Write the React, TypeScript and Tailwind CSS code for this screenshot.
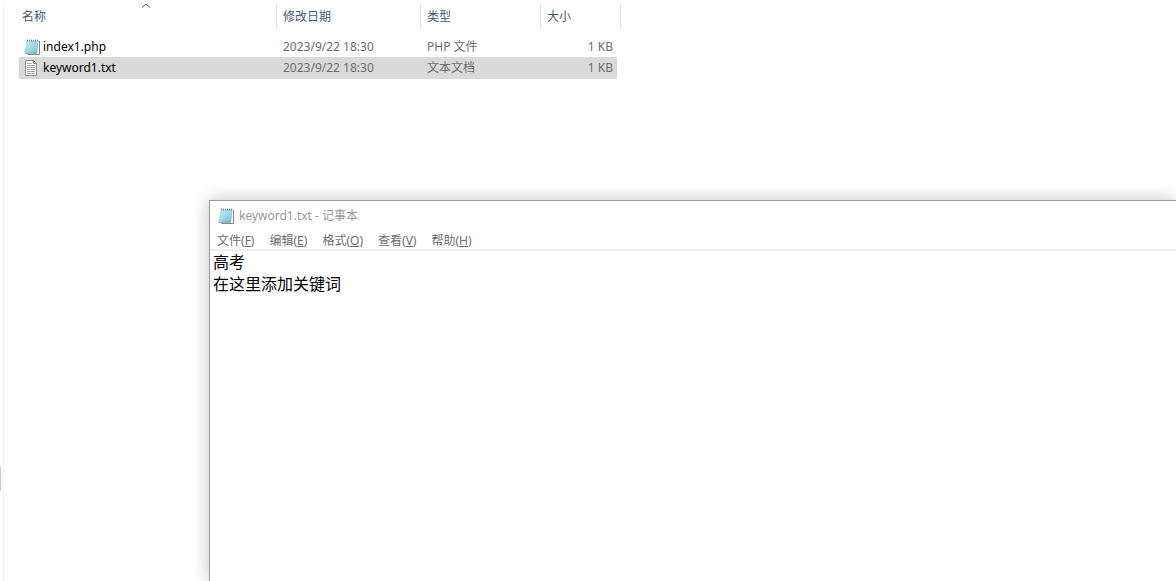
const files = [
  { name: "index1.php", date: "2023/9/22 18:30", type: "PHP 文件", size: "1 KB", selected: false },
  { name: "keyword1.txt", date: "2023/9/22 18:30", type: "文本文档", size: "1 KB", selected: true },
];

const menus = [
  { label: "文件", shortcut: "F" },
  { label: "编辑", shortcut: "E" },
  { label: "格式", shortcut: "O" },
  { label: "查看", shortcut: "V" },
  { label: "帮助", shortcut: "H" },
];

function NotepadIcon() {
  return (
    <svg viewBox="0 0 16 16" className="size-4 shrink-0" aria-hidden="true">
      <defs>
        <linearGradient id="pad" x1="0" y1="0" x2="1" y2="1">
          <stop offset="0" stopColor="#c8e9f1" />
          <stop offset="0.5" stopColor="#9cd5e3" />
          <stop offset="1" stopColor="#5fb4cc" />
        </linearGradient>
      </defs>
      <path d="M13 1.5h2.5v14H4V14h8z" fill="#fbf8ee" />
      <path d="M15.5 2v13.5H3.5" fill="none" stroke="#8d8573" />
      <path d="M2.5 1.5h12L13 14.5H.5z" fill="url(#pad)" />
      <path d="M.6 14.5h12" stroke="#5f9fb2" strokeWidth="0.6" />
      <path d="M2.6 5h11M2.3 7h11M2 9h11M1.7 11h11" stroke="#c3e8f0" strokeWidth="0.4" />
      <path d="M3.5.6v1.8M5.5.6v1.8M7.5.6v1.8M9.5.6v1.8M11.5.6v1.8M13.5.6v1.8" stroke="#4b6a74" strokeWidth="0.8" />
    </svg>
  );
}

function TextIcon() {
  return (
    <svg viewBox="0 0 16 16" className="size-4 shrink-0" aria-hidden="true">
      <path d="M1.5.5h8l3 3v12h-11z" fill="#fff" stroke="#8b8b8b" />
      <path d="M9.5.5v3h3" fill="none" stroke="#8b8b8b" />
      <path d="M3 3.5h5M3 5.5h8M3 7.5h8M3 9.5h8M3 11.5h8M3 13.5h8" stroke="#a8a8a8" />
    </svg>
  );
}

function FileList() {
  return (
    <table className="w-[602px] table-fixed border-separate border-spacing-0 text-left">
      <colgroup>
        <col className="w-[258px]" />
        <col className="w-36" />
        <col className="w-[120px]" />
        <col className="w-[76px]" />
        <col className="w-1" />
      </colgroup>
      <thead className="text-[#43597a]">
        <tr className="h-[27px]">
          <th className="relative border-r border-[#e0e0e0] pl-[3px] font-normal" aria-sort="ascending">
            名称
            <svg viewBox="0 0 10 5" className="absolute top-0 left-[122px] h-[5px] w-2.5" aria-hidden="true">
              <path d="M1 4.5l4-3.5 4 3.5" fill="none" stroke="#5c5c5c" />
            </svg>
          </th>
          <th className="border-r border-[#e0e0e0] pl-1.5 font-normal">修改日期</th>
          <th className="border-r border-[#e0e0e0] pl-1.5 font-normal">类型</th>
          <th colSpan={2} className="border-r border-[#e0e0e0] pl-1.5 font-normal">大小</th>
        </tr>
      </thead>
      <tbody className="text-[#6d6d6d]">
        <tr className="h-1.5" />
        {files.map((file) => (
          <tr key={file.name} className={file.selected ? "h-[22px] *:bg-[#d9d9d9]" : "h-[21px]"}>
            <td className="pl-[5px] text-black">
              <div className="flex items-center gap-[3px]">
                {file.selected ? <TextIcon /> : <NotepadIcon />}
                {file.name}
              </div>
            </td>
            <td className="pl-1.5">{file.date}</td>
            <td className="pl-1.5">{file.type}</td>
            <td className="pr-1 text-right">{file.size}</td>
          </tr>
        ))}
      </tbody>
    </table>
  );
}

function NotepadWindow() {
  return (
    <section className="absolute top-[200px] right-0 bottom-0 left-[209px] flex flex-col border-t border-l border-[#9b9b9b] bg-white shadow-[0_0_16px_rgba(0,0,0,0.25)]">
      <header className="flex h-[29px] items-center gap-[5px] pl-2 text-[#999]">
        <NotepadIcon />
        <h1>keyword1.txt - 记事本</h1>
      </header>
      <nav className="flex h-[21px] items-end gap-[15px] border-b-2 border-[#f0f0f0] pl-[7px] text-[#6d6d6d]">
        {menus.map((menu) => (
          <button key={menu.label} type="button">
            {menu.label}(<u>{menu.shortcut}</u>)
          </button>
        ))}
      </nav>
      <textarea
        aria-label="keyword1.txt"
        spellCheck={false}
        defaultValue={"高考\n在这里添加关键词"}
        className="w-full flex-1 resize-none bg-white pl-[3px] text-base leading-[22px] text-black outline-none"
      />
    </section>
  );
}

export default function App() {
  return (
    <main className="relative flex min-h-screen overflow-hidden bg-white pt-[3px] font-['Noto_Sans','Noto_Sans_CJK_SC',sans-serif] text-xs leading-4">
      <div className="flex w-1 flex-col justify-end border-r border-[#f3f3f3] pb-[90px]">
        <div className="h-6 w-px bg-[#cdcdcd]" />
      </div>
      <div className="pl-[15px]">
        <FileList />
      </div>
      <NotepadWindow />
    </main>
  );
}
